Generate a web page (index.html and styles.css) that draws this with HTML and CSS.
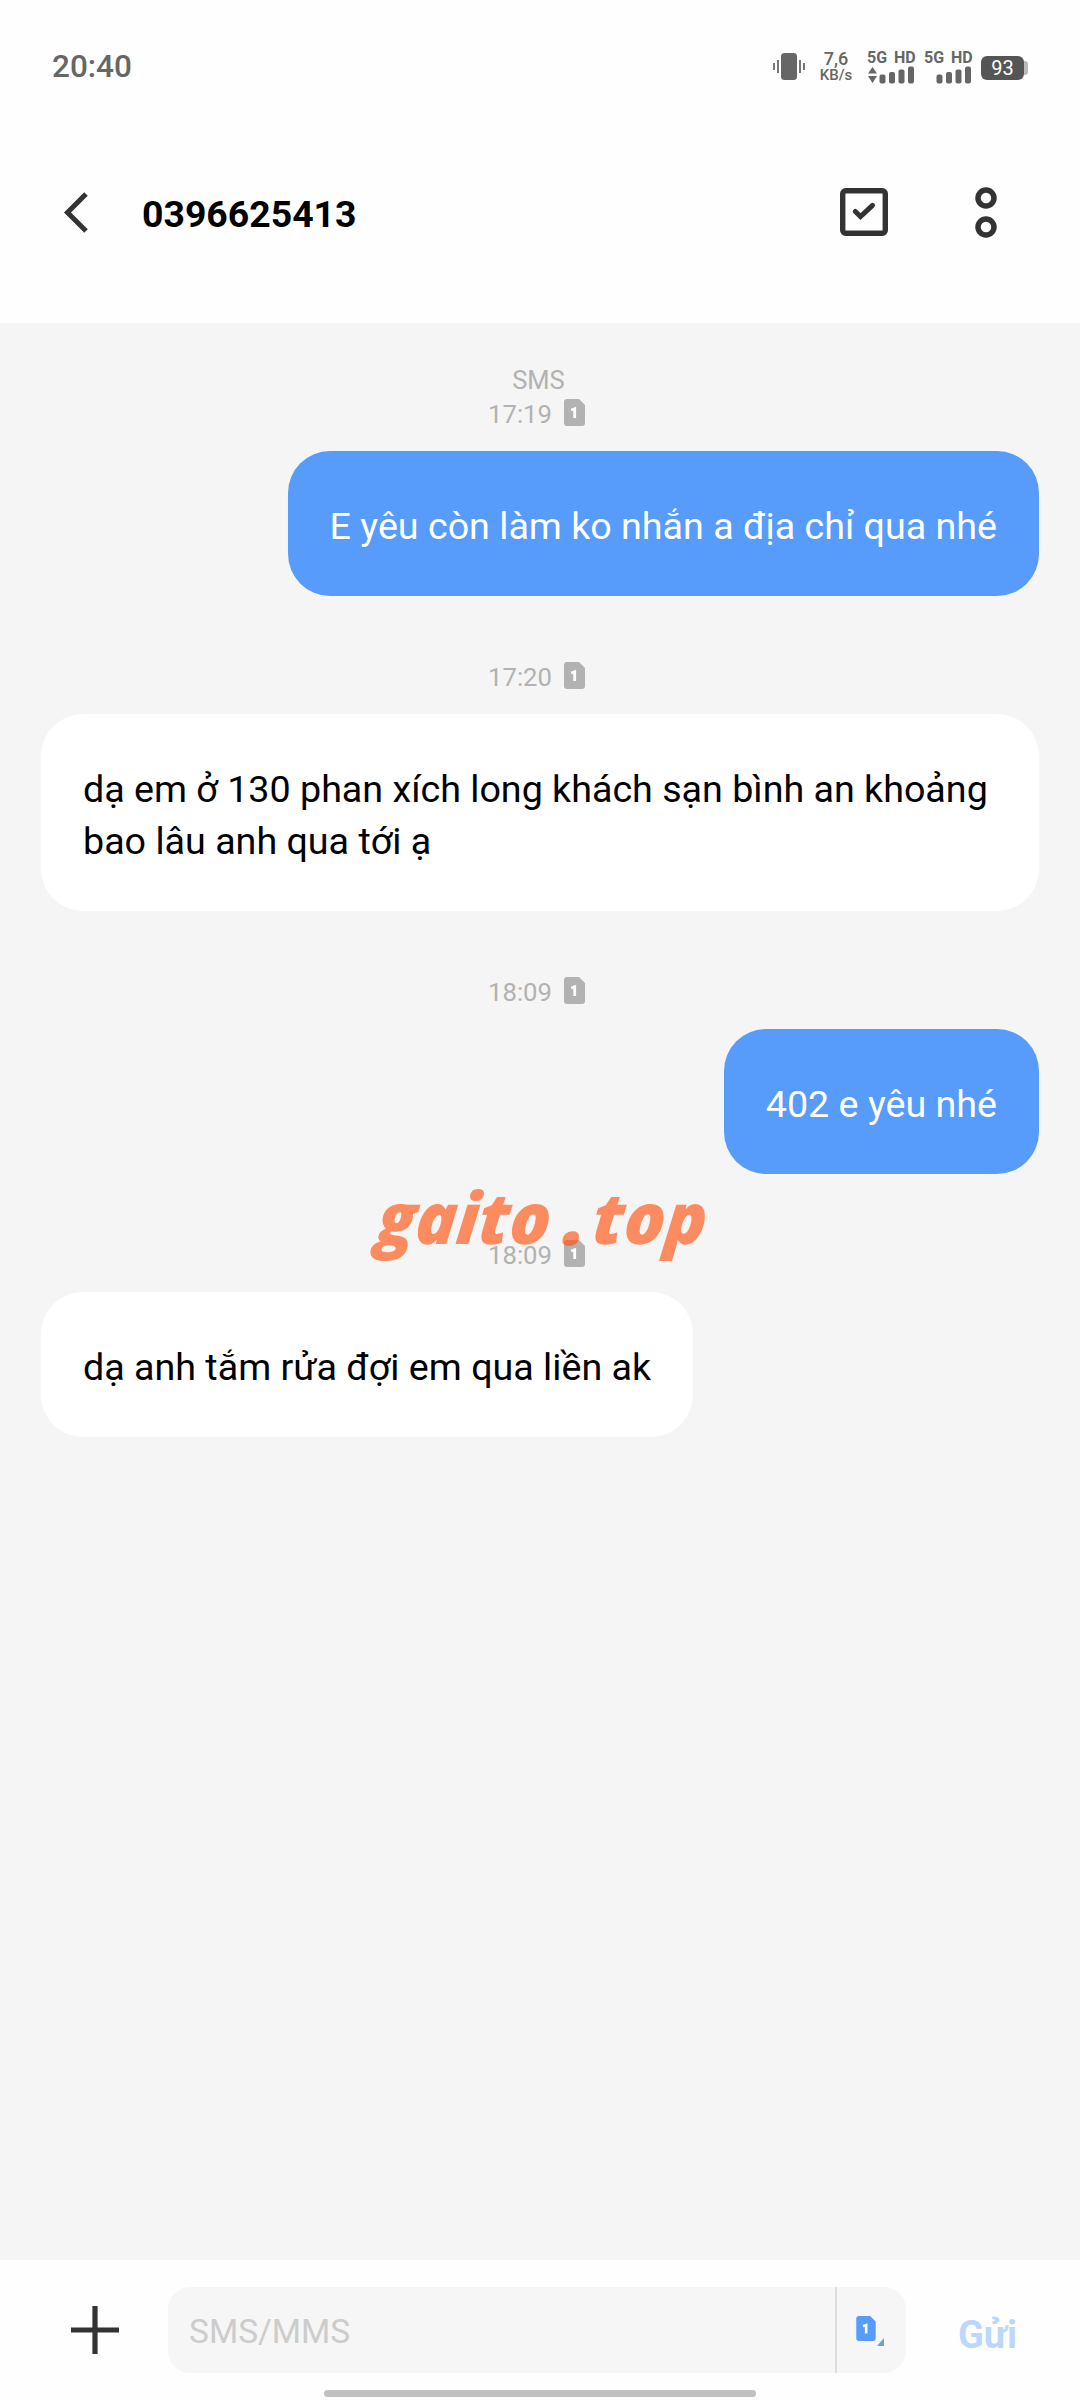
FILE: index.html
```html
<!DOCTYPE html>
<html lang="vi">
<head>
<meta charset="utf-8">
<title>0396625413</title>
<link rel="stylesheet" href="styles.css">
</head>
<body>
<svg class="defs" width="0" height="0" aria-hidden="true">
  <symbol id="sim" viewBox="0 0 21 27">
    <path d="M3 0H15L21 6V24Q21 27 18 27H3Q0 27 0 24V3Q0 0 3 0Z" fill="currentColor"/>
    <path d="M7.200 11L10.700 9.800V19" fill="none" stroke="#fff" stroke-width="2.800"/>
  </symbol>
</svg>
<div class="screen">
  <header class="top">
    <div class="status">
      <span class="clock">20:40</span>
      <div class="indicators">
        <svg class="vibrate" viewBox="0 0 32 28"><rect x="8" y="0" width="16" height="27" rx="3.500" fill="#666"/><path d="M1 10v7M5 7v13M27 7v13M31 10v7" stroke="#777" stroke-width="2"/></svg>
        <div class="speed"><span class="rate">7,6</span><span class="unit">KB/s</span></div>
        <div class="network"><span>5G HD</span>
          <svg viewBox="0 0 48 18"><path d="M1 7.500L5.500 1L10 7.500ZM1 10L5.500 17L10 10Z" fill="#666"/><g fill="#666"><rect x="12.500" y="8.500" width="6" height="9" rx="2"/><rect x="22" y="6" width="6" height="11.500" rx="2"/><rect x="31.500" y="3.500" width="6" height="14" rx="2"/><rect x="41" y="0.500" width="6" height="17" rx="2"/></g></svg></div>
        <div class="network"><span>5G HD</span>
          <svg viewBox="0 0 48 18"><g fill="#666"><rect x="12.500" y="8.500" width="6" height="9" rx="2"/><rect x="22" y="6" width="6" height="11.500" rx="2"/><rect x="31.500" y="3.500" width="6" height="14" rx="2"/><rect x="41" y="0.500" width="6" height="17" rx="2"/></g></svg></div>
        <div class="battery"><span>93</span></div>
      </div>
    </div>
    <div class="titlebar">
      <svg class="back" viewBox="0 0 26 42"><path d="M23 2L4.500 20.500L23 39" fill="none" stroke="#333" stroke-width="5"/></svg>
      <h1 class="number">0396625413</h1>
      <svg class="select" viewBox="0 0 48 48"><rect x="2.700" y="2.700" width="42.600" height="42.600" rx="3" fill="none" stroke="#333" stroke-width="5.400"/><path d="M15.300 23.500L20.500 28.500L32.500 17.300" fill="none" stroke="#333" stroke-width="5" stroke-linecap="round"/></svg>
      <svg class="more" viewBox="0 0 22 51"><g fill="none" stroke="#333" stroke-width="5.500"><circle cx="11" cy="11" r="8"/><circle cx="11" cy="40" r="8"/></g></svg>
    </div>
  </header>

  <main class="chat">
    <div class="kind">SMS</div>
    <div class="stamp"><time>17:19</time><svg><use href="#sim"/></svg></div>
    <p class="bubble sent">E yêu còn làm ko nhắn a địa chỉ qua nhé</p>
    <div class="stamp later"><time>17:20</time><svg><use href="#sim"/></svg></div>
    <p class="bubble">dạ em ở 130 phan xích long khách sạn bình an khoảng bao lâu anh qua tới ạ</p>
    <div class="stamp later"><time>18:09</time><svg><use href="#sim"/></svg></div>
    <p class="bubble sent">402 e yêu nhé</p>
    <div class="stamp later"><time>18:09</time><svg><use href="#sim"/></svg></div>
    <p class="bubble">dạ anh tắm rửa đợi em qua liền ak</p>
    <svg class="watermark" viewBox="0 0 350 100">
      <g transform="translate(0 62) skewX(-6)">
        <text x="7" y="0" textLength="174" lengthAdjust="spacingAndGlyphs">gaito</text>
        <text class="dot" x="194" y="1">.</text>
        <text x="223" y="0" textLength="114" lengthAdjust="spacingAndGlyphs">top</text>
      </g>
    </svg>
  </main>

  <footer class="composer">
    <svg class="plus" viewBox="0 0 48 48"><path d="M24 0V48M0 24H48" stroke="#333" stroke-width="5.200"/></svg>
    <div class="field">
      <span class="placeholder">SMS/MMS</span>
      <div class="simpick">
        <svg class="card"><use href="#sim"/></svg>
        <svg class="corner" viewBox="0 0 7 8"><path d="M7 0V8H0Z" fill="#6a9fe8"/></svg>
      </div>
    </div>
    <span class="send">Gửi</span>
    <div class="homebar"></div>
  </footer>
</div>
</body>
</html>
```
FILE: styles.css
```css
* { box-sizing: border-box; }
body { margin: 0; background: #fff; font-family: Roboto, sans-serif; }
svg { display: block; flex: none; }
.defs { position: absolute; }
.screen { width: 1080px; height: 2400px; display: flex; flex-direction: column; overflow: hidden; }

.top { height: 323px; flex: none; background: #fefefe; }
.status { height: 132px; padding: 0 52px 0 52px; display: flex; justify-content: space-between; align-items: center; color: #666; }
.clock { font-size: 31.500px; font-weight: 500; }
.indicators { display: flex; align-items: center; height: 40px; }
.vibrate { width: 32px; height: 28px; margin-right: 15px; margin-top: 1px; }
.speed { width: 32px; display: flex; flex-direction: column; align-items: center; font-weight: 500; margin-right: 15px; }
.rate { font-size: 18px; line-height: 18px; }
.unit { font-size: 15px; line-height: 15px; }
.network { width: 48px; margin-right: 9px; font-size: 16px; line-height: 17px; font-weight: 700; white-space: nowrap; word-spacing: 3px; }
.network svg { width: 48px; height: 18px; }
.battery { position: relative; width: 43px; height: 24px; background: #555; border-radius: 6px; color: #fff; font-size: 20px; line-height: 25px; text-align: center; margin-top: 3px; margin-right: 4px; }
.battery::after { content: ""; position: absolute; left: 43px; top: 5px; width: 4px; height: 14px; border-radius: 0 3px 3px 0; background: #bbb; }

.titlebar { height: 160px; padding: 0 83px 0 63px; display: flex; align-items: center; }
.back { width: 26px; height: 42px; margin-top: 2px; }
.number { flex: 1; margin: 3px 0 0 53px; font-size: 37.400px; font-weight: 700; color: #000; }
.select { width: 48px; height: 48px; margin-right: 87px; }
.more { width: 22px; height: 51px; }

.chat { position: relative; flex: 1; padding: 41px 41px 0; background: #f5f5f5; display: flex; flex-direction: column; align-items: flex-start; }
.kind { align-self: center; height: 33px; margin-right: 3px; line-height: 33px; font-size: 25.500px; color: #b2b2b2; }
.stamp { align-self: center; height: 33px; margin-bottom: 21px; margin-right: 7px; display: flex; align-items: center; gap: 12px; font-size: 25.700px; color: #b2b2b2; }
.stamp svg { width: 21px; height: 27px; margin-top: -2px; }
.stamp.later { margin-top: 64px; }
.bubble { margin: 0; padding: 49px 42px 44px; border-radius: 42px; background: #fff; color: #000; font-size: 37.650px; line-height: 52px; }
.bubble.sent { align-self: flex-end; background: #579bfb; color: #fff; }
.watermark { position: absolute; left: 368px; top: 859px; width: 350px; height: 100px; overflow: visible; font-family: "Open Sans", sans-serif; font-size: 71px; font-style: italic; font-weight: 800; fill: rgba(255, 83, 16, .65); }
.watermark .dot { font-size: 78px; }

.composer { position: relative; height: 140px; flex: none; background: #fefefe; padding: 27px 63px 0 71px; display: flex; align-items: flex-start; }
.plus { width: 48px; height: 48px; margin-top: 19px; }
.field { width: 738px; height: 86px; margin-left: 49px; border-radius: 22px; background: #f6f6f6; display: flex; }
.placeholder { flex: 1; padding-left: 21px; line-height: 90px; font-size: 33.500px; color: #ccc; }
.simpick { width: 71px; border-left: 2px solid #ddd; display: flex; align-items: flex-start; padding: 29px 0 0 19px; }
.card { width: 20px; height: 25px; color: #579bfb; margin-right: 1px; }
.corner { width: 7px; height: 8px; margin-top: 22px; }
.send { margin-left: 52px; line-height: 96px; font-size: 38px; font-weight: 700; color: #bcd7fd; }
.homebar { position: absolute; left: 324px; top: 130px; width: 432px; height: 7px; border-radius: 4px; background: #c1c1c1; }
```
